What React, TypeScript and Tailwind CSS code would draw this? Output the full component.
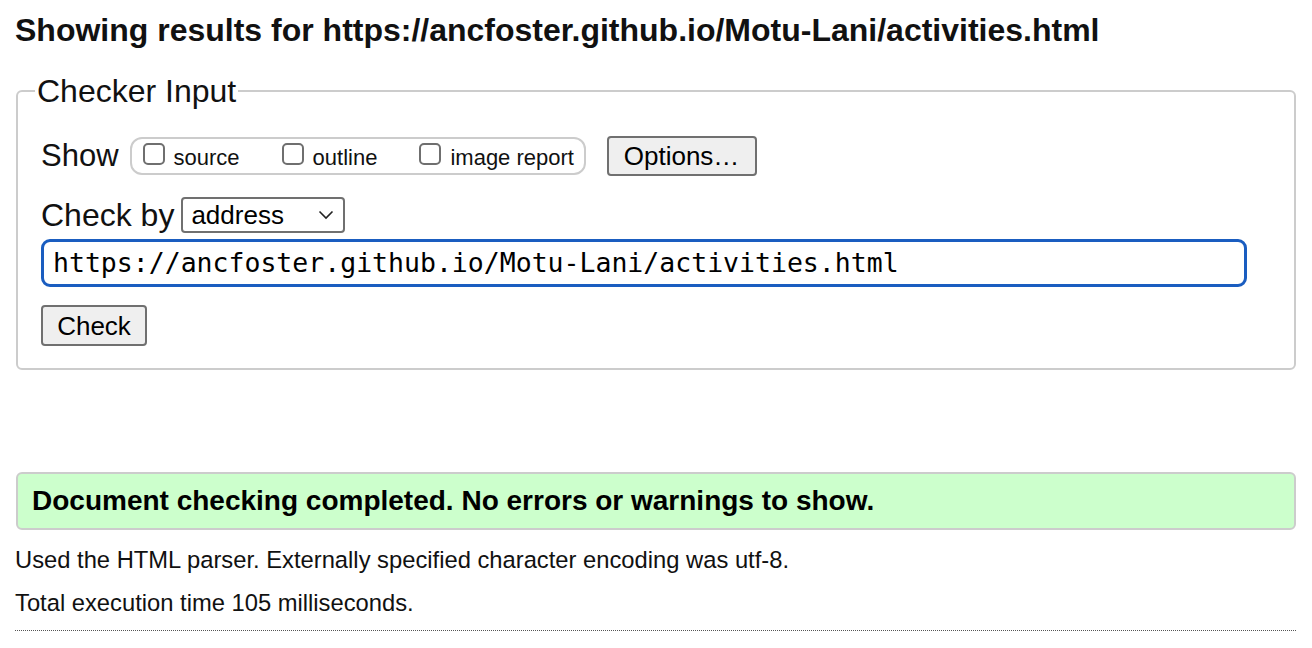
import React from "react";

const sans = { fontFamily: '"Liberation Sans", Arial, Helvetica, sans-serif' };

function Box({ label }: { label: string }) {
  return (
    <label className="flex items-center">
      <span className="mb-[5px] block h-[22px] w-[22px] rounded-[5px] border-2 border-[#6f6f6f] bg-white" />
      <span className="ml-[9px] mt-[3px] text-[22px] leading-[26px] text-[#111]">{label}</span>
    </label>
  );
}

export default function App() {
  return (
    <div
      className="h-[648px] w-[1312px] overflow-hidden bg-white pl-[15px] pr-[16px] text-black"
      style={sans}
    >
      <h2 className="mt-[14px] text-[32px] font-bold leading-[32px] text-[#111]">
        Showing results for https://ancfoster.github.io/Motu-Lani/activities.html
      </h2>

      <fieldset className="ml-[1px] mt-[29px] rounded-[6px] border-2 border-[#cccccc] pb-[22px] pl-[23px] pr-[23px]">
        <legend className="-ml-[6px] px-[2px] text-[32px] leading-[32px] text-[#111]">
          Checker Input
        </legend>

        <div className="mt-[29px] flex items-center">
          <span className="text-[31px] leading-[32px] text-[#111]">Show</span>
          <div className="ml-[11px] flex h-[38px] w-[456px] items-center gap-[42px] rounded-[12px] border-2 border-[#cccccc] pl-[11px]">
            <Box label="source" />
            <Box label="outline" />
            <Box label="image report" />
          </div>
          <button className="ml-[21px] h-[40px] w-[150px] rounded-[4px] border-2 border-[#707070] bg-[#efefef] text-[26px] leading-[30px] text-black">
            Options…
          </button>
        </div>

        <div className="mt-[21px] flex items-center">
          <span className="text-[32px] leading-[32px] text-[#111]">Check by</span>
          <div className="ml-[7px] flex h-[36px] w-[164px] items-center justify-between rounded-[4px] border-2 border-[#707070] bg-white pl-[8px] pr-[9px]">
            <span className="text-[26px] leading-[28px] text-black">address</span>
            <svg width="16" height="10" viewBox="0 0 16 10" fill="none">
              <path d="M1.5 1.5 L8 8 L14.5 1.5" stroke="#222" strokeWidth="1.6" />
            </svg>
          </div>
        </div>

        <div className="mt-[6px] flex h-[48px] w-[1206px] items-center rounded-[9px] border-[3px] border-[#1a5dc0] bg-white pl-[9px]">
          <span
            className="text-[26.5px] leading-[30px] text-black"
            style={{ fontFamily: '"DejaVu Sans Mono", "Liberation Mono", monospace' }}
          >
            https://ancfoster.github.io/Motu-Lani/activities.html
          </span>
        </div>

        <button className="mt-[18px] h-[41px] w-[106px] rounded-[4px] border-2 border-[#707070] bg-[#efefef] text-[26px] leading-[30px] text-black">
          Check
        </button>
      </fieldset>

      <div className="ml-[1px] mt-[102px] flex h-[58px] items-center rounded-[6px] border-2 border-[#cccccc] bg-[#ccffcc] pl-[14px]">
        <span className="text-[28px] font-bold leading-[30px] text-black">
          Document checking completed. No errors or warnings to show.
        </span>
      </div>

      <p className="mt-[17px] text-[23.75px] leading-[26px] text-[#111]">
        Used the HTML parser. Externally specified character encoding was utf-8.
      </p>
      <p className="mt-[17px] text-[23.75px] leading-[26px] text-[#111]">
        Total execution time 105 milliseconds.
      </p>
      <div className="mt-[14px] border-t border-dotted border-[#555]" />
    </div>
  );
}
